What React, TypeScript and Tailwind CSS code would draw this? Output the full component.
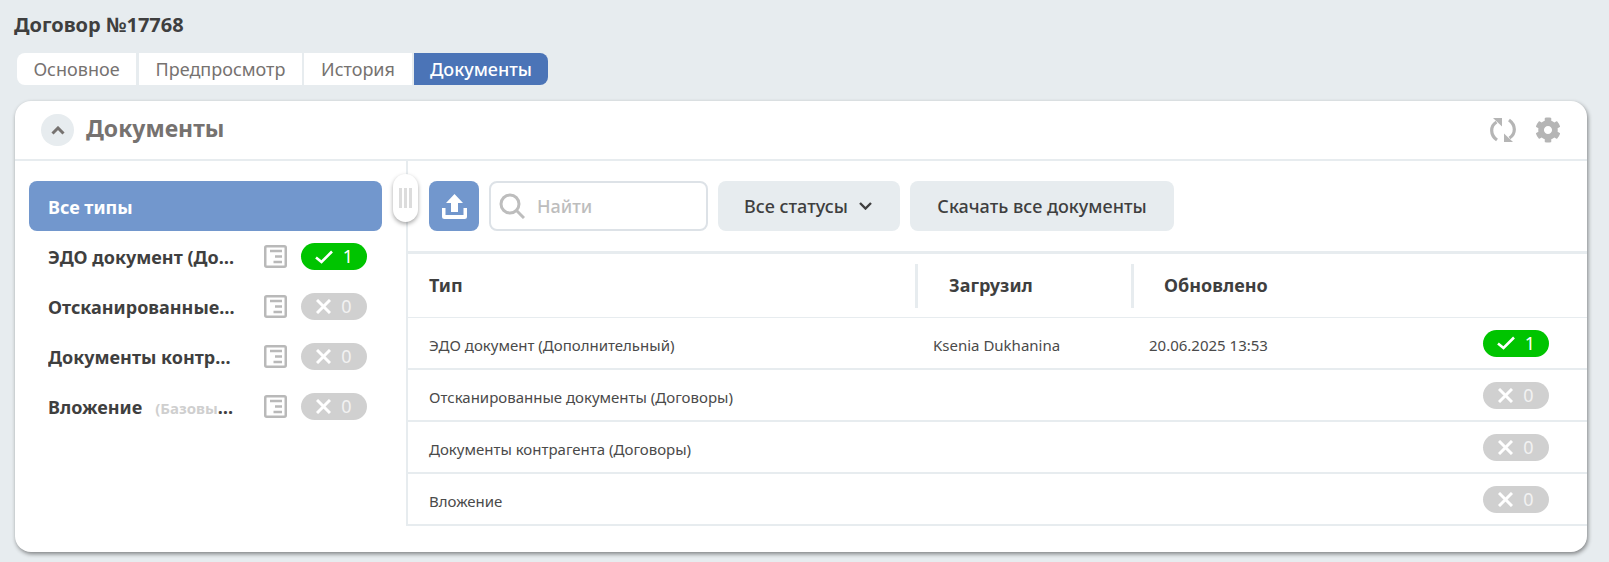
import { FaCog } from "react-icons/fa";

const font = { fontFamily: '"Noto Sans", "Open Sans", sans-serif' };

function Check() {
  return (
    <svg width="18" height="14" viewBox="0 0 18 14" fill="none" stroke="white" strokeWidth="2.600">
      <path d="M1 7.500 L6.500 12 L17 1.500" />
    </svg>
  );
}
function Cross() {
  return (
    <svg width="15" height="15" viewBox="0 0 15 15" fill="none" stroke="white" strokeWidth="3">
      <path d="M1 1 L14 14 M14 1 L1 14" />
    </svg>
  );
}
function Badge({ n }: { n: number }) {
  return (
    <div
      className={`flex h-[27px] w-[66px] shrink-0 items-center justify-center gap-[10px] rounded-full text-[18px] text-white ${
        n ? "bg-[#00c400]" : "bg-[#d0d0d0]"
      }`}
    >
      {n ? <Check /> : <Cross />}
      <span className={n ? "" : "text-[#f2f2f2]"}>{n}</span>
    </div>
  );
}
function DocIcon() {
  return (
    <svg width="23" height="23" viewBox="0 0 23 23" fill="none" className="shrink-0">
      <rect x="1.250" y="1.250" width="20.500" height="20.500" rx="1.500" stroke="#b9b9b9" strokeWidth="2.500" />
      <path d="M6 6H18M11 11.500H18M9.500 17H18" stroke="#b9b9b9" strokeWidth="2.500" />
    </svg>
  );
}
function Upload() {
  return (
    <svg width="27" height="25" viewBox="0 0 27 25" fill="white">
      <path d="M13.500 0 L22 9 H17 V18 H10 V9 H5 Z" />
      <path d="M1 14 H4.500 V21 H22.500 V14 H26 V22.500 Q26 25 23.500 25 H3.500 Q1 25 1 22.500 Z" />
    </svg>
  );
}
function Search() {
  return (
    <svg width="26" height="26" viewBox="0 0 26 26" fill="none" stroke="#bdbdbd" strokeWidth="3">
      <circle cx="11" cy="11" r="9" />
      <path d="M17.500 17.500 L25 25" />
    </svg>
  );
}
function Sync() {
  return (
    <svg width="26" height="26" viewBox="0 0 26 26" fill="none">
      <path d="M6.500 5 C0 9 0 18 7 23" stroke="#b5b5b5" strokeWidth="3.200" />
      <path d="M19.500 21 C26 17 26 8 19 3" stroke="#b5b5b5" strokeWidth="3.200" />
      <path d="M3 1 H12 V9.500 Z" fill="#b5b5b5" />
      <path d="M23 25 H14 V16.500 Z" fill="#b5b5b5" />
    </svg>
  );
}

const sideRows: { name: string; sub?: string; n: number }[] = [
  { name: "ЭДО документ (Дополнительный)", n: 1 },
  { name: "Отсканированные документы (Договоры)", n: 0 },
  { name: "Документы контрагента (Договоры)", n: 0 },
  { name: "Вложение", sub: "(Базовый тип документа)", n: 0 },
];

const rows = [
  { t: "ЭДО документ (Дополнительный)", u: "Ksenia Dukhanina", d: "20.06.2025 13:53", n: 1 },
  { t: "Отсканированные документы (Договоры)", u: "", d: "", n: 0 },
  { t: "Документы контрагента (Договоры)", u: "", d: "", n: 0 },
  { t: "Вложение", u: "", d: "", n: 0 },
];

export default function App() {
  return (
    <div style={font} className="h-[562px] overflow-hidden bg-[#e7ecef] pt-[11px] text-[#3f3f3f]">
      <div className="ml-[14px] h-[28px] text-[20px] font-bold leading-[28px]">Договор №17768</div>

      <div className="ml-[17px] mt-[14px] flex h-[32px] text-[18px] leading-[32px] text-[#767270]">
        <div className="w-[119px] rounded-l-[8px] bg-white text-center">Основное</div>
        <div className="ml-[3px] w-[163px] bg-white text-center">Предпросмотр</div>
        <div className="ml-[2px] w-[108px] bg-white text-center">История</div>
        <div className="ml-[2px] w-[134px] rounded-r-[8px] bg-[#4b74b7] text-center font-medium text-white">
          Документы
        </div>
      </div>

      <div className="relative ml-[15px] mt-[16px] h-[451px] w-[1572px] rounded-[16px] bg-white shadow-[1px_2px_4px_rgba(0,0,0,0.45)]">
        <div className="flex h-[60px] items-center border-b-2 border-[#e7ecef] pl-[26px] pr-[26px]">
          <div className="flex h-[32px] w-[33px] items-center justify-center rounded-full bg-[#e7ecef]">
            <svg width="14" height="9" viewBox="0 0 14 9" fill="none" stroke="#767270" strokeWidth="3">
              <path d="M1.500 7.500 L7 2 L12.500 7.500" />
            </svg>
          </div>
          <div className="mb-[4px] ml-[12px] text-[23px] font-bold text-[#767270]">Документы</div>
          <div className="ml-auto flex items-center gap-[19px]">
            <Sync />
            <FaCog size={26} color="#b5b5b5" />
          </div>
        </div>

        <div className="flex">
          <div className="w-[391px] pl-[14px] pt-[20px]">
            <div className="flex h-[50px] w-[353px] items-center rounded-[8px] bg-[#7297cd] pl-[19px] pt-[2px] text-[18px] font-bold text-white">
              Все типы
            </div>
            <div className="mt-[12px] flex flex-col gap-[23px]">
              {sideRows.map((r) => (
                <div key={r.name} className="flex h-[27px] w-[338px] items-center pl-[19px]">
                  <div className="mr-[25px] w-[192px] truncate pt-[2px] text-[18px] font-bold">
                    {r.name}
                    {r.sub && <span className="ml-[13px] text-[15px] font-bold text-[#cfcfcf]">{r.sub}</span>}
                  </div>
                  <DocIcon />
                  <div className="ml-[14px]">
                    <Badge n={r.n} />
                  </div>
                </div>
              ))}
            </div>
          </div>

          <div className="relative h-[365px] flex-1 border-l-2 border-[#e7ecef]">
            <div className="absolute left-[-15px] top-[13px] flex h-[48px] w-[25px] items-center justify-center gap-[2px] rounded-full bg-white shadow-[0_2px_4px_rgba(0,0,0,0.35)]">
              <span className="h-[20px] w-[3px] bg-[#dcdcdc]" />
              <span className="h-[20px] w-[3px] bg-[#dcdcdc]" />
              <span className="h-[20px] w-[3px] bg-[#dcdcdc]" />
            </div>

            <div className="flex h-[93px] gap-[10px] border-b-[3px] border-[#e7ecef] pl-[21px] pt-[20px]">
              <div className="flex h-[50px] w-[50px] items-center justify-center rounded-[8px] bg-[#7297cd]">
                <Upload />
              </div>
              <div className="flex h-[50px] w-[219px] items-center rounded-[8px] border-2 border-[#dde2e7] pl-[8px] text-[18px] font-medium text-[#bdbdbd]">
                <Search />
                <span className="ml-[12px]">Найти</span>
              </div>
              <div className="flex h-[50px] w-[182px] items-center justify-center gap-[11px] rounded-[8px] bg-[#e7ecef] pr-[2px] text-[18px] font-medium">
                Все статусы
                <svg width="13" height="8" viewBox="0 0 13 8" fill="none" stroke="#3f3f3f" strokeWidth="2.400">
                  <path d="M1 1 L6.500 6.500 L12 1" />
                </svg>
              </div>
              <div className="flex h-[50px] w-[264px] items-center justify-center rounded-[8px] bg-[#e7ecef] text-[18px] font-medium">
                Скачать все документы
              </div>
            </div>

            <div className="grid h-[64px] grid-cols-[507px_216px_1fr] items-center border-b border-[#e7ecef] text-[18px] font-bold">
              <div className="pl-[21px]">Тип</div>
              <div className="flex h-[44px] items-center pl-[32px]">
                <span className="-ml-[32px] mr-[31px] h-[44px] w-[3px] bg-[#e7ecef]" />
                Загрузил
              </div>
              <div className="flex h-[44px] items-center pl-[32px]">
                <span className="-ml-[32px] mr-[30px] h-[44px] w-[3px] bg-[#e7ecef]" />
                Обновлено
              </div>
            </div>

            {rows.map((r) => (
              <div
                key={r.t}
                className="grid h-[52px] grid-cols-[525px_216px_1fr_66px_38px] items-center border-b-2 border-[#e7ecef] text-[15px] text-[#4a4a4a]"
              >
                <div className="pl-[21px] pt-[4px]">{r.t}</div>
                <div className="pt-[4px]">{r.u}</div>
                <div className="pt-[4px]">{r.d}</div>
                <Badge n={r.n} />
                <div />
              </div>
            ))}
          </div>
        </div>
      </div>
    </div>
  );
}
